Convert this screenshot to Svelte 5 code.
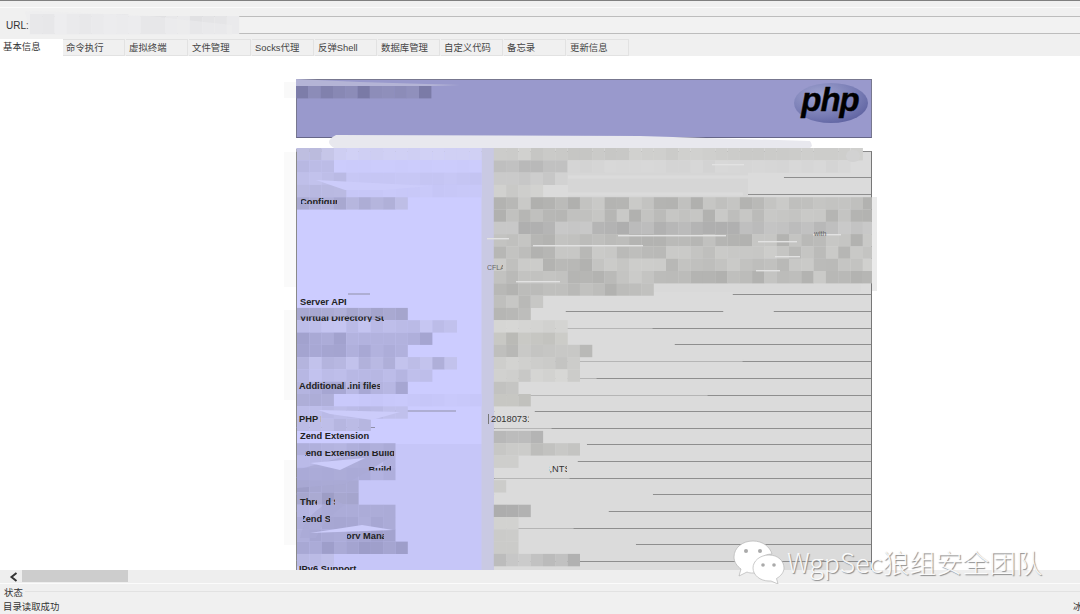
<script>
  const tabs = ['基本信息','命令执行','虚拟终端','文件管理','Socks代理','反弹Shell','数据库管理','自定义代码','备忘录','更新信息'];

  // visible label, row height (the rest of the sheet is redacted)
  const rows = [
    ['',26.4],['',17],['',99.6],['Server API',17],['',16.6],['',16.7],['',16.4],['',17],['',17],['',16],
    ['',17],['Zend Extension',16.6],['',17],['',16.4],['',16.6],['',16.4],['',17],['',16.6],['',16.6],['',17]
  ];

  let seed = 7;
  const rnd = () => (seed = (seed * 16807) % 2147483647) / 2147483647;
  const CELL = 12.3;
  const X0 = 297;
  const Y0 = 148;

  // [row, first col, last col, base r, base g, base b, spread]
  const regions = [
    [0,3,14,208,208,244,2],[1,3,14,204,204,252,1],[2,4,14,198,198,244,2],[3,4,14,200,200,248,2],
    [0,0,2,192,192,226,8],[1,0,2,190,190,232,6],[2,0,3,190,190,232,5],[3,0,3,188,188,228,8],[4,0,7,174,174,214,10],[4,8,8,190,190,230,3],
    [13,0,8,168,168,208,8],[14,0,12,192,192,236,7],[15,0,10,170,170,214,11],[16,0,8,174,174,218,10],
    [17,0,12,186,186,228,11],[18,0,10,188,188,232,7],[19,0,8,176,176,220,10],[20,0,2,168,168,210,8],[20,3,14,200,200,250,2],
    [21,0,8,188,188,232,5],[22,0,5,186,186,228,5],
    [24,0,7,176,176,220,6],[25,0,7,184,184,230,8],[26,0,7,176,176,222,8],
    [27,0,4,164,164,206,7],[28,0,4,164,164,204,7],[29,0,7,178,178,222,7],[30,0,7,172,172,216,8],
    [31,0,7,168,168,212,8],[32,0,8,164,164,208,8],[33,0,2,190,190,232,5],
    [0,16,45,204,204,202,6],[1,16,21,186,186,186,8],[1,22,44,214,214,214,3],[2,16,21,204,204,204,8],[3,16,19,204,204,202,8],
    [4,16,46,190,190,188,14],[5,16,46,190,190,188,14],[6,16,46,188,188,188,14],[7,16,46,190,190,188,12],
    [8,16,46,192,192,190,14],[9,16,46,194,194,192,16],[10,16,46,192,192,190,16],[11,16,28,186,186,184,10],
    [12,16,19,190,190,188,10],[13,16,18,194,194,192,12],[14,16,21,212,212,210,4],[15,16,21,194,194,190,12],
    [16,16,23,196,196,194,12],[17,16,22,202,202,200,10],[18,16,22,208,208,206,8],[19,16,17,192,192,190,6],
    [20,16,18,198,198,194,8],[23,16,19,190,190,190,10],[24,16,22,198,198,196,10],[25,16,17,208,208,206,4],
    [27,16,16,208,208,206,4],[29,16,18,176,176,176,10],[30,16,17,210,210,208,4],[31,16,17,204,204,202,4],
    [32,16,17,200,200,198,4],[33,16,22,190,190,190,14],[34,16,23,208,208,206,6]
  ];

  const cells = [];
  for (const [k, a, b, r, g, bl, s] of regions) {
    for (let j = a; j <= b; j++) {
      const d = (rnd() - 0.5) * 2 * s;
      cells.push({ x: X0 + j * CELL, y: Y0 + k * CELL, fill: `rgb(${r + d | 0},${g + d | 0},${bl + d | 0})` });
    }
  }
  const titleCells = [];
  for (let j = 0; j < 11; j++) {
    const v = 122 + rnd() * 24;
    titleCells.push({ x: 296 + j * 12.3, fill: `rgb(${v | 0},${v | 0},${v + 44 | 0})` });
  }
  const urlCells = [];
  for (let j = 0; j < 17; j++) {
    const v = 224 + rnd() * 14;
    urlCells.push({ x: 30 + j * 12.3, y: j < 8 ? 14 : 16, h: j < 8 ? 20 : 18, fill: `rgb(${v | 0},${v | 0},${v + 2 | 0})` });
  }

  const wipes = [
    [177,494,784],[194,494,743],[293.5,494,733],[310.5,494,566],[310.5,723,774],[327,494,552],[327,566,653],[343.5,494,675],
    [360,494,743],[377,494,597],[394,494,708],[410.5,494,535],[427,494,552],[444,494,587],[460.5,494,578],[477,494,570],
    [494,494,653],[510.5,494,609],[527,494,574],[544,494,636]
  ];
  const labelRules = [[293.5,348,370],[410.5,337,383],[410.5,394,456],[427,296,375],[460.5,320,415],[460.5,434,445],[477,296,307],[493.5,296,304],[510.5,296,340],[560,296,310]];
  const darkWedges = [
    'M297 470 L360 452 L392 456 L370 470 L345 484 L297 488 Z',
    'M300 538 Q305 512 335 500 L345 505 Q322 520 316 538 Z'
  ];
  const lightWedges = [
    'M316 180 L430 186 L385 190 L345 190 Z',
    'M310 463 L365 458 L340 470 Z',
    'M310 533 L393 530 L362 525 Z',
    'M318 410 L400 412 L372 420 L330 414 Z'
  ];
  const streaks = [
    [618,235,108],[533,245,110],[487,238,22],[758,241,39],[813,234,28],[775,256,25],[516,281,44],[756,270,24],[712,164,32]
  ];

  // What is left legible of the redacted rows: [text, x, baseline, clip x, clip y, clip w, clip h, kind]
  const fragments = [
    ['Configure Command',300,205,301,197,36,7,'bold'],
    ['Virtual Directory Support',300,321,300,316.5,84,5.5,'bold'],
    ['Additional .ini files',299,389,298,381,82,11,'bold'],
    ['PHP Extension',299,422,298,416,23,10,'bold'],
    ['Zend Extension Build',300,456,305,451,89,6,'bold'],
    ['PHP Extension Build',300,473,367,465,24,5.5,'bold'],
    ['Thread Safety',300,505,299,497,18,10,'bold'],
    ['Thread Safety',300,505,326,497,9,8,'bold'],
    ['Zend Signal Handling',300,522,303,514,27,10,'bold'],
    ['Zend Memory Manager',300,539,347,532,37,7,'bold'],
    ['IPv6 Support',299,572,298,563,66,7,'bold'],
    ['20180731',491,422,488,414,41,10,'plain'],
    ['API320170718,NTS',488,472,549,464,18,10,'plain'],
    ['with',814,236,814,230,24,8,'tiny'],
    ['CFLAGS',487,270,487,264,16,8,'tiny']
  ];
</script>

<div class="window">
  <header class="toolbar">
    <label class="url">
      <span>URL:</span>
      <span class="field"></span>
    </label>
  </header>

  <nav class="tabs">
    {#each tabs as tab, i}
      <span class="tab" class:active={i === 0}>{tab}</span>
    {/each}
  </nav>

  <main class="content">
    <section class="sheet">
      <div class="banner">
        <svg class="logo" viewBox="0 0 76 42" aria-label="php logo">
          <defs>
            <radialGradient id="egg" cx="0.35" cy="0.3" r="0.85">
              <stop offset="0" stop-color="#a0a4d0" />
              <stop offset="0.65" stop-color="#7579b2" />
              <stop offset="1" stop-color="#565a9a" />
            </radialGradient>
          </defs>
          <ellipse cx="38" cy="21" rx="37" ry="20" fill="url(#egg)" />
          <text x="37" y="29" text-anchor="middle" class="logotext">php</text>
        </svg>
      </div>
      <div class="table">
        {#each rows as [label, height]}
          <div class="row" style="height:{height}px">
            <div class="key">{label}</div>
            <div class="value"></div>
          </div>
        {/each}
      </div>
    </section>
  </main>

  <div class="hscroll">
    <span class="arrow">
      <svg viewBox="0 0 10 10" width="10" height="10"><path d="M7.5 1 L2.5 5 L7.5 9" fill="none" stroke="#333" stroke-width="2" /></svg>
    </span>
    <span class="thumb"></span>
  </div>

  <footer class="status">
    <div class="status-head"><span>状态</span></div>
    <div class="status-line"><span>目录读取成功</span><span class="engine">冰蝎</span></div>
  </footer>

  <svg class="scribble" viewBox="0 0 1080 614" width="1080" height="614" aria-hidden="true">
    {#each urlCells as c}
      <rect x={c.x} y={c.y} width="12.4" height={c.h} fill={c.fill} />
    {/each}
    <path d="M25 12 Q30 10 60 12 L150 16 L232 25 L232 35 L30 35 Z" fill="#ececee" opacity="0.55" />

    <rect x="284" y="82" width="12" height="16" fill="#f9f9f9" />
    <path d="M296 79 L360 82 L460 85 L432 86 L296 86 Z" fill="#b4b4d6" />
    {#each titleCells as c}
      <rect x={c.x} y="86" width="12.4" height="12.4" fill={c.fill} />
    {/each}
    <path d="M336 135 L640 136 L810 141 Q815 148 806 149 L336 149 Q322 142 336 135 Z" fill="#e8e8ee" />
    <rect x="296" y="148" width="186" height="3.4" fill="#d4d4f2" />
    <rect x="296" y="149" width="54" height="2" fill="#b0b0c4" />

    <rect x="568" y="172" width="180" height="25" fill="#d6d6d6" />
    <rect x="653" y="283" width="208" height="10" fill="#d9d9d9" rx="3" />
    {#each wipes as [y, a, b]}
      <rect x={a} y={y - 1.5} width={b - a} height="3" fill="#dbdbdb" rx="1" />
    {/each}
    {#each labelRules as [y, a, b]}
      <rect x={a} y={y} width={b - a} height="1" fill="#8f8fa8" />
    {/each}

    <rect x="297" y="444" width="185" height="126" fill="#c6c6f8" />
    <rect x="481.5" y="148" width="12.5" height="422" fill="#c9c9e3" />
    {#each cells as c}
      {#if c.y < 566}
        <rect x={c.x} y={c.y} width="12.4" height="12.4" fill={c.fill} />
      {/if}
    {/each}
    {#each darkWedges as d}
      <path {d} fill="#aaaad6" opacity="0.8" />
    {/each}
    {#each lightWedges as d}
      <path {d} fill="#ccccfa" />
    {/each}
    {#each streaks as [x, y, w]}
      <rect {x} {y} width={w} height="1.4" fill="#e2e2e2" />
    {/each}

    <rect x="284" y="152" width="12" height="135" fill="#fafafa" />
    <rect x="284" y="310" width="12" height="90" fill="#fafafa" />
    <rect x="284" y="460" width="12" height="85" fill="#fafafa" />
    <rect x="872" y="197" width="5" height="94" fill="#ebebeb" />
    <rect x="846" y="150" width="14" height="12" fill="#d2d2d2" rx="6" />

    {#each fragments as [text, x, y, cx, cy, cw, ch, kind]}
      <svg x={cx} y={cy} width={cw} height={ch} viewBox="{cx} {cy} {cw} {ch}">
        <text {x} {y} class="frag {kind}">{text}</text>
      </svg>
    {/each}
    <rect x="488" y="414" width="1" height="10" fill="#777" />
  </svg>

  <div class="watermark">
    <svg viewBox="0 0 52 44" width="52" height="44" aria-hidden="true">
      <path d="M20 1 C9 1 1 8 1 17 C1 22 4 26 8 29 L6 36 L14 32 C16 33 18 33 20 33 L24 33 C22 22 29 14 39 14 C37 7 30 1 20 1 Z" fill="#fff" stroke="#b5b5b5" stroke-width="0.7" />
      <circle cx="13" cy="11" r="2" fill="#aaa" />
      <circle cx="27" cy="11" r="2" fill="#aaa" />
      <path d="M36 15 C27 15 20 21 20 28 C20 35 27 41 36 41 L38 41 L45 44 L43.5 38.5 C48 36 51 32 51 28 C51 21 45 15 36 15 Z" fill="#fff" stroke="#b5b5b5" stroke-width="0.7" />
      <circle cx="30" cy="25" r="1.8" fill="#aaa" />
      <circle cx="41" cy="25" r="1.8" fill="#aaa" />
    </svg>
    <span>WgpSec狼组安全团队</span>
  </div>
</div>

<style>
  :global(body) {
    margin: 0;
    background: #fff;
  }
  .window {
    position: relative;
    width: 1080px;
    height: 614px;
    overflow: hidden;
    display: flex;
    flex-direction: column;
    background: #f0f0f0;
    color: #333;
    font-family: "Liberation Sans", "Noto Sans CJK SC", sans-serif;
    font-size: 9.4px;
  }
  .toolbar {
    height: 39px;
    box-sizing: border-box;
    border-top: 1px solid #808080;
    padding-top: 15px;
    background: linear-gradient(#f0f0f0 6px, #fafafa 6px, #fafafa 7px, #f0f0f0 7px);
  }
  .url {
    display: flex;
    align-items: center;
    height: 18px;
    padding-left: 6px;
    gap: 2px;
  }
  .url > span:first-child {
    font-size: 10px;
  }
  .field {
    flex: 1;
    height: 18px;
    box-sizing: border-box;
    border-top: 1px solid #bdbdbd;
    border-bottom: 1px solid #bdbdbd;
    background: #f2f2f2;
  }
  .tabs {
    display: flex;
    height: 17px;
  }
  .tab {
    width: 62px;
    flex: none;
    box-sizing: border-box;
    padding: 1px 0 0 3px;
    border: 1px solid #e2e2e2;
    border-left: 0;
    background: #f0f0f0;
    line-height: 14px;
    color: #444;
    margin-right: 1px;
  }
  .tab.active {
    width: 63px;
    margin-right: 0;
    padding-top: 1px;
    border: 0;
    background: #fff;
    color: #333;
  }
  .content {
    flex: 1;
    min-height: 0;
    overflow: hidden;
    background: #fff;
  }
  .sheet {
    width: 576px;
    margin: 23px 0 0 296px;
  }
  .banner {
    height: 59px;
    box-sizing: border-box;
    border: 1px solid #77778f;
    border-bottom-color: #666688;
    background: #9999cc;
    display: flex;
    justify-content: flex-end;
    align-items: flex-start;
    padding: 2px 2px 0 0;
  }
  .logo {
    width: 76px;
    height: 42px;
  }
  .logotext {
    font: italic bold 33px "Liberation Sans", sans-serif;
    fill: #000;
    stroke: #000;
    stroke-width: 0.4;
    letter-spacing: -1px;
  }
  .table {
    margin-top: 13px;
    border-top: 1px solid #8a8a8a;
    border-left: 1px solid #8a8a8a;
    border-right: 1px solid #777;
  }
  .row {
    display: flex;
    box-sizing: border-box;
  }
  .key {
    width: 197px;
    flex: none;
    box-sizing: border-box;
    background: #ccccff;
    padding: 1px 0 0 3px;
    font-size: 9.3px;
    line-height: 13px;
    font-weight: bold;
    color: #222;
    white-space: nowrap;
    overflow: hidden;
  }
  .value {
    flex: 1;
    box-sizing: border-box;
    background: #dbdbdb;
    border-bottom: 1px solid #8e8e8e;
  }
  .hscroll {
    height: 13px;
    display: flex;
    background: #eeeeee;
    border-bottom: 1px solid #fbfbfb;
    position: relative;
    z-index: 1;
  }
  .arrow {
    width: 22px;
    display: flex;
    align-items: center;
    justify-content: center;
    padding-left: 6px;
    box-sizing: border-box;
  }
  .thumb {
    width: 106px;
    height: 12px;
    background: #cdcdcd;
  }
  .status {
    height: 30px;
    background: #f0f0f0;
  }
  .status-head {
    height: 15px;
    display: flex;
    align-items: center;
    padding-left: 4px;
  }
  .status-head::after {
    content: "";
    flex: 1;
    height: 1px;
    margin-left: 2px;
    background: #e2e2e2;
  }
  .status-line {
    height: 15px;
    display: flex;
    padding: 1px 0 0 3px;
    line-height: 14px;
    color: #333;
    box-sizing: border-box;
    position: relative;
    overflow: hidden;
  }
  .engine {
    position: absolute;
    left: 1073px;
    top: 1px;
    white-space: nowrap;
  }
  .scribble {
    position: absolute;
    left: 0;
    top: 0;
    pointer-events: none;
  }
  .frag {
    font-family: "Liberation Sans", sans-serif;
    font-size: 9.3px;
    fill: #222;
  }
  .frag.bold {
    font-weight: bold;
  }
  .frag.plain {
    fill: #333;
  }
  .frag.tiny {
    font-size: 7px;
    fill: #666;
  }
  .watermark {
    position: absolute;
    left: 733px;
    top: 540px;
    z-index: 2;
    display: flex;
    align-items: center;
    gap: 2px;
    color: rgba(255, 255, 255, 0.92);
    font-family: "Noto Sans CJK SC", "Noto Sans", sans-serif;
    font-weight: 300;
    font-size: 26.6px;
    line-height: 44px;
    text-shadow: 1px 1px 1px #8a8a8a;
    white-space: nowrap;
  }
</style>
